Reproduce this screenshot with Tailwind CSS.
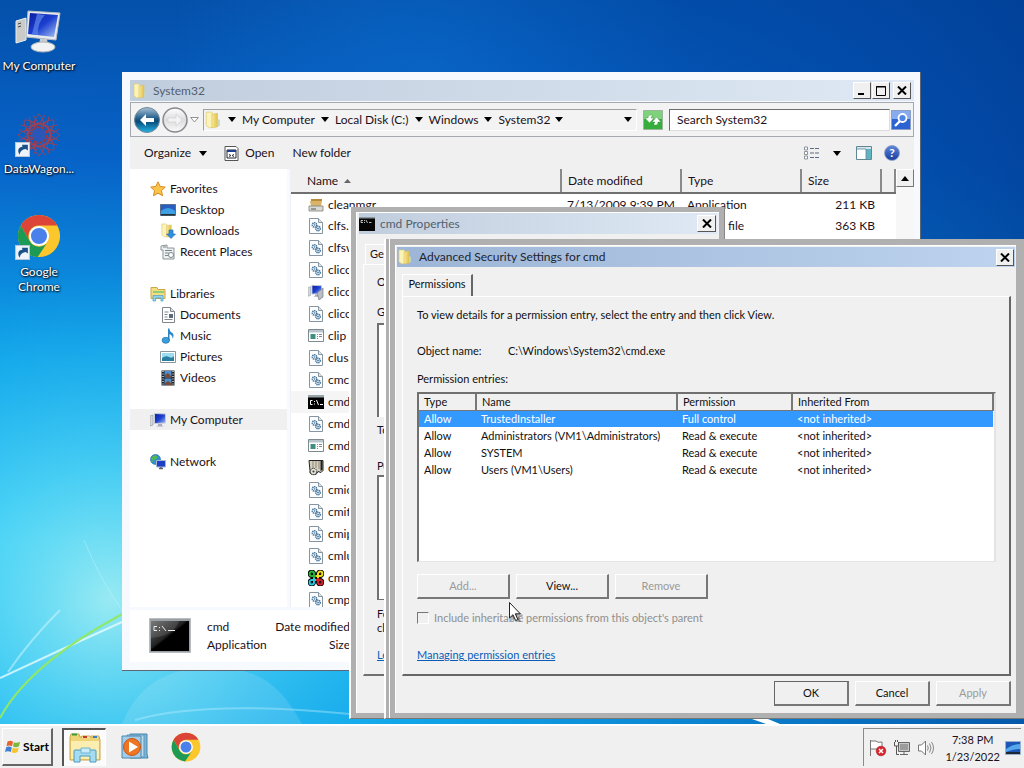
<!DOCTYPE html>
<html lang="en">
<head>
<meta charset="utf-8">
<title>Desktop</title>
<script src="https://cdn.jsdelivr.net/npm/@tailwindcss/browser@4"></script>
</head>
<body class="h-screen overflow-hidden flex flex-col font-['Lato',sans-serif] text-xs text-[#1c1018] cursor-default select-none">

<svg class="absolute size-0" aria-hidden="true">
  <defs>
    <linearGradient id="gFolder" x1="0" x2="1"><stop offset="0" stop-color="#f8ea9c"/><stop offset="1" stop-color="#dfc04a"/></linearGradient>
    <linearGradient id="gScreen" x1="0" x2="1" y2="1"><stop offset="0" stop-color="#0a1ea0"/><stop offset=".5" stop-color="#1c3fd0"/><stop offset="1" stop-color="#a8c4f4"/></linearGradient>
    <linearGradient id="gBack" x1="0" x2="0" y1="0" y2="1"><stop offset="0" stop-color="#a9c3d6"/><stop offset=".45" stop-color="#1d5a86"/><stop offset=".55" stop-color="#084a78"/><stop offset="1" stop-color="#22b4e6"/></linearGradient>
    <linearGradient id="gFwd" x1="0" x2="0" y1="0" y2="1"><stop offset="0" stop-color="#ffffff"/><stop offset=".5" stop-color="#dcdcde"/><stop offset="1" stop-color="#fafafa"/></linearGradient>
    <linearGradient id="gCmd" x1="0" x2="1" y1="0" y2="1"><stop offset="0" stop-color="#666"/><stop offset=".45" stop-color="#222"/><stop offset=".5" stop-color="#000"/></linearGradient>
  </defs>
  <symbol id="folder" viewBox="0 0 16 16"><path d="M2 1h5l1 2v11l-3 1-3-2z" fill="#fbf3b8" stroke="#e0cd7c" stroke-width=".7"/><path d="M7 3l5-1v12l-5 1z" fill="url(#gFolder)" stroke="#dcc260" stroke-width=".6"/><path d="M12 7l2 1v5l-2 1z" fill="#c9d3b8"/></symbol>
  <symbol id="gear" viewBox="0 0 14 16"><path d="M.5.5h9l4 4v11H.5z" fill="#fbfdff" stroke="#8795a2"/><path d="M9.500.5v4h4" fill="#dde4ea" stroke="#8795a2"/><circle cx="5.500" cy="7" r="2.200" fill="none" stroke="#3f6f95" stroke-width="1.500" stroke-dasharray="1.200 .6"/><circle cx="5.500" cy="7" r=".8" fill="#3f6f95"/><circle cx="9" cy="10.500" r="2.300" fill="#cfe0ee" stroke="#3f6f95" stroke-width="1.400" stroke-dasharray="1.200 .6"/><circle cx="9" cy="10.500" r=".8" fill="#3f6f95"/></symbol>
  <symbol id="app" viewBox="0 0 16 16"><path d="M.5 1.500h15v12H.5z" fill="#fff" stroke="#7f8a90"/><path d="M1 2h14v2.500H1z" fill="#b9c7cc"/><path d="M2.500 6h5v5h-5z" fill="#3d8f80"/><path d="M9 6.500h1M9 8.500h1M9 10.500h1M11 6.500h3M11 8.500h3" stroke="#7c8c94"/></symbol>
  <symbol id="cmd" viewBox="0 0 16 14"><path d="M0 0h16v14H0z" fill="#000"/><path d="M0 0h16v2.500H0z" fill="#9aa3a8"/><path d="M4.500 5.500h-2v4h2M6.500 6v1M6.500 8.500v1M8.500 5l2 5M12 9.500h3" stroke="#fff" fill="none"/></symbol>
  <symbol id="cmdsmall" viewBox="0 0 16 14"><path d="M0 0h16v14H0z" fill="#050505"/><path d="M0 0h16v1.500H0z" fill="#8f989e"/><path d="M4 3.500H2v2h2M5.500 3v1M5.500 5v1M7 3l1.500 3M10 5.500h2.500" stroke="#e8e8e8" stroke-width=".8" fill="none"/></symbol>
  <symbol id="monitor" viewBox="0 0 16 16"><path d="M0 4l3-1v10l-3 1z" fill="#d5d9df" stroke="#8a909a" stroke-width=".6"/><path d="M4.500 1.500l11 .5v9l-11 .5z" fill="url(#gScreen)" stroke="#c6cbd6"/><path d="M8 12h4v1.500l2 1H6l2-1z" fill="#a9aebc"/></symbol>
  <symbol id="chrome" viewBox="0 0 48 48"><circle cx="24" cy="24" r="23" fill="#fbc72d"/><path d="M4.100 12.500A23 23 0 0 1 43.900 12.500H24A11.500 11.500 0 0 0 14 29.800z" fill="#db4437"/><path d="M4.100 12.500A23 23 0 0 0 22.500 47L34 29.800A11.500 11.500 0 0 1 14 29.800z" fill="#1d9a55"/><circle cx="24" cy="24" r="11" fill="#fff"/><circle cx="24" cy="24" r="8.800" fill="#4a80ec"/></symbol>
  <symbol id="shortcut" viewBox="0 0 14 14"><path d="M.5.5h13v13H.5z" fill="#eef4fb" stroke="#b8c6d6"/><path d="M4.500 12C1.500 8 3.500 4.500 7 4.500L6.500 2.500H12V8l-2-1.500C7 7 4.500 8.500 4.500 12z" fill="#1b4f8a"/></symbol>
  <symbol id="tri" viewBox="0 0 8 5"><path d="M0 0h8L4 5z" fill="#000"/></symbol>
  <symbol id="close" viewBox="0 0 10 9"><path d="M1 .5l8 8M9 .5l-8 8" stroke="#000" stroke-width="2"/></symbol>
  <symbol id="disk" viewBox="0 0 16 16"><path d="M3 2h11v2H3zM4 5h9v2H4z" fill="#b98a3c"/><path d="M2 4h12l-1 5H3z" fill="#d8b468"/><path d="M1 9h14v5H1z" fill="#d9d9d4" stroke="#80807a" stroke-width=".8"/><path d="M3 12h5" stroke="#555"/></symbol>
  <symbol id="net" viewBox="0 0 16 16"><use href="#monitor" width="14" height="14"/><path d="M9 9l6-5v9l-4 3z" fill="#b9bec6" stroke="#737a84" stroke-width=".7"/></symbol>
  <symbol id="scroll" viewBox="0 0 16 16"><path d="M1 .5h14v10l-2 2-3-1-2 3H4q-3-1-2-4z" fill="#d6d0c0" stroke="#222"/><path d="M5 1v7M8 1v7M11 1v8" stroke="#8d8778"/><path d="M12.500 1v10l2-1V1z" fill="#222"/><circle cx="5.500" cy="11.500" r="3.200" fill="#e6e2d6" stroke="#333" stroke-dasharray="1.500 .6"/><circle cx="5.500" cy="11.500" r="1.100" fill="#444"/></symbol>
  <symbol id="knot" viewBox="0 0 16 16"><g id="loop" fill="none" stroke="#000" stroke-width="4"><path d="M6 6H3.800A2.200 2.200 0 1 1 6 3.800V8M10 6h2.200A2.200 2.200 0 1 0 10 3.800V8M6 10H3.800A2.200 2.200 0 1 0 6 12.200V8M10 10h2.200A2.200 2.200 0 1 1 10 12.200V8M5 6h6M5 10h6"/></g><g fill="none" stroke-width="2"><path d="M8 6H3.800A2.200 2.200 0 1 1 6 3.800V8" stroke="#24b43c"/><path d="M8 6h4.200A2.200 2.200 0 1 0 10 3.800V8" stroke="#f2dc1c"/><path d="M8 10H3.800A2.200 2.200 0 1 0 6 12.200V8" stroke="#28c8e0"/><path d="M8 10h4.200A2.200 2.200 0 1 1 10 12.200V8" stroke="#d8202c"/></g></symbol>
</svg>

<main class="relative flex-1 min-h-0 overflow-hidden">
  <svg class="absolute inset-0 size-full" viewBox="0 0 1024 724" preserveAspectRatio="none" aria-hidden="true">
    <defs>
      <linearGradient id="sky" x1="0" x2="0" y1="0" y2="1"><stop offset="0" stop-color="#0450aa"/><stop offset=".22" stop-color="#0763c8"/><stop offset=".5" stop-color="#0ea4ea"/><stop offset=".75" stop-color="#2cc6f6"/><stop offset="1" stop-color="#12aeee"/></linearGradient>
      <radialGradient id="glow" gradientUnits="userSpaceOnUse" cx="110" cy="600" r="330"><stop offset="0" stop-color="#a8f2f4" stop-opacity=".9"/><stop offset=".4" stop-color="#62ddf6" stop-opacity=".6"/><stop offset="1" stop-color="#20b4f0" stop-opacity="0"/></radialGradient>
      <linearGradient id="dark" x1="0" x2="1"><stop offset="0" stop-color="#003a90" stop-opacity="0"/><stop offset=".35" stop-color="#0050b8" stop-opacity=".05"/><stop offset="1" stop-color="#003c94" stop-opacity=".75"/></linearGradient>
      <radialGradient id="topglow" gradientUnits="userSpaceOnUse" cx="430" cy="70" r="260"><stop offset="0" stop-color="#1080e0" stop-opacity=".35"/><stop offset="1" stop-color="#1488e8" stop-opacity="0"/></radialGradient>
    </defs>
    <path d="M0 0h1024v724H0z" fill="url(#sky)"/>
    <path d="M0 0h1024v724H0z" fill="url(#glow)"/>
    <path d="M0 0h1024v724H0z" fill="url(#topglow)"/>
    <path d="M0 0h1024v724H0z" fill="url(#dark)"/>
    <path d="M122 724c20-50 60-58 100-56s60 20 80 56" fill="#fff" fill-opacity=".12"/>
    <path d="M135 720q70-20 215-6" fill="none" stroke="#bdf0ff" stroke-opacity=".4" stroke-width="2"/>
    <path d="M0 678Q60 650 122 622" fill="none" stroke="#e6fbff" stroke-opacity=".8" stroke-width="2"/>
    <path d="M8 672Q30 640 60 610" fill="none" stroke="#d8f7ff" stroke-opacity=".5" stroke-width="2"/>
    <path d="M84 540Q100 580 122 610" fill="none" stroke="#d8f7ff" stroke-opacity=".35" stroke-width="1"/>
    <path d="M0 718Q30 662 130 610" fill="none" stroke="#8fe86a" stroke-width="2"/>
    <path d="M752 719h16l12 5h-14z" fill="#fff"/>
  </svg>

  <nav aria-label="Desktop" class="relative w-[78px] pt-2 flex flex-col text-white text-center leading-[15px] [text-shadow:1px_1px_2px_#000,0_0_2px_#001a40]">
    <a href="#computer" class="h-[103px] flex flex-col items-center gap-0.5">
      <svg class="size-12" viewBox="0 0 48 48"><path d="M1 13l10-3v22L1 35z" fill="#c9cbc8" stroke="#eceeec"/><path d="M3 16l3-1M3 19l3-1" stroke="#444"/><path d="M13 3l32 2-4 27-30-3z" fill="#e8ebee" stroke="#b7bcc4"/><path d="M15 5l28 2-4 22-26-3z" fill="url(#gScreen)"/><path d="M22 6l8 1q-8 8-7 20l-6-1z" fill="#5f88ec" fill-opacity=".7"/><path d="M25 31h7l1 6h-9z" fill="#c8ccd0"/><ellipse cx="28" cy="39" rx="12" ry="5" fill="#f1f2f3" stroke="#aeb4ba"/></svg>
      My Computer</a>
    <a href="#datawagon" class="h-[103px] flex flex-col items-center gap-0.5">
      <svg class="size-12" viewBox="0 0 48 48"><g fill="none" stroke="#a8404f" stroke-width="1" stroke-opacity=".85"><g id="petal"><path d="M24 24Q14 12 24 3Q34 12 24 24M18 4l6 9 6-9M16 11l16 4M32 11l-16 4"/></g><use href="#petal" transform="rotate(45 24 24)"/><use href="#petal" transform="rotate(90 24 24)"/><use href="#petal" transform="rotate(135 24 24)"/><use href="#petal" transform="rotate(180 24 24)"/><use href="#petal" transform="rotate(225 24 24)"/><use href="#petal" transform="rotate(270 24 24)"/><use href="#petal" transform="rotate(315 24 24)"/></g><circle cx="24" cy="24" r="7" fill="#2a56b8"/><circle cx="24" cy="24" r="8" fill="none" stroke="#a8343c" stroke-width="2" stroke-dasharray="3 2"/><use href="#shortcut" x="0" y="31" width="15" height="15"/></svg>
      DataWagon...</a>
    <a href="#chrome" class="h-[103px] flex flex-col items-center gap-0.5">
      <svg class="size-12" viewBox="0 0 48 48"><use href="#chrome" x="2" width="44" height="44" y="0"/><use href="#shortcut" x="0" y="31" width="15" height="15"/></svg>
      Google<br>Chrome</a>
  </nav>

  <!-- File browser -->
  <section aria-label="System32" class="absolute left-[122px] top-[72px] w-[799px] h-[599px] flex flex-col bg-[#f6faff] border-r border-b border-[#5d6675] p-2 pr-1.5 pb-2">
    <header class="h-[21px] shrink-0 flex items-center bg-linear-to-r from-[#c0cddd] to-[#dfe9f5] pl-0.5 pr-[3px] text-[#54606e]">
      <svg class="size-4"><use href="#folder"/></svg>
      <h1 class="ml-[5px] flex-1">System32</h1>
      <div class="flex [&>button]:h-[17px] [&>button]:w-[18px] [&>button]:bg-[#f0f0f0] [&>button]:border [&>button]:border-white [&>button]:border-r-[#555] [&>button]:border-b-[#555] [&>button]:flex [&>button]:justify-center [&>button]:items-center">
        <button type="button" aria-label="Minimize"><svg class="w-2.5 h-[9px]" viewBox="0 0 10 9"><path d="M1 7h6v2H1z"/></svg></button>
        <button type="button" aria-label="Maximize" class="ml-px"><svg class="w-2.5 h-2.5" viewBox="0 0 10 10"><path d="M.5.5h9v9h-9zM0 1h10" fill="none" stroke="#000"/></svg></button>
        <button type="button" aria-label="Close" class="ml-[3px]"><svg class="w-2.5 h-[9px]"><use href="#close"/></svg></button>
      </div>
    </header>

    <div class="mt-px h-[35px] shrink-0 flex items-center bg-[#f3f3f3] border border-[#a5a9af] pl-[3px] pr-0.5">
      <button type="button" aria-label="Back"><svg class="size-[26px]" viewBox="0 0 26 26"><circle cx="13" cy="13" r="12.500" fill="url(#gBack)" stroke="#6f8797"/><path d="M6 13l6-6v4h8v4h-8v4z" fill="#fff"/></svg></button>
      <button type="button" aria-label="Forward" class="ml-0.5"><svg class="size-[26px]" viewBox="0 0 26 26"><circle cx="13" cy="13" r="12" fill="url(#gFwd)" stroke="#85898f" stroke-width="1.500"/><path d="M20 13l-6-6v4H6v4h8v4z" fill="#f2f2f2" stroke="#cdcdd0" stroke-width=".6"/></svg></button>
      <button type="button" aria-label="Recent pages" class="ml-0.5"><svg class="w-[9px] h-1.5" viewBox="0 0 9 6"><path d="M.7.5h7.600L4.500 5z" fill="#fff" stroke="#777" stroke-width=".8"/></svg></button>
      <div class="ml-1 flex-1 h-[22px] flex items-center border border-r-white border-b-white border-[#a0a0a0] bg-[#f3f3f3] pr-1">
        <svg class="size-[18px]"><use href="#folder"/></svg>
        <svg class="ml-1.5 w-2 h-[5px]"><use href="#tri"/></svg>
        <button type="button" class="ml-1.5">My Computer</button><svg class="ml-1.5 w-2 h-[5px]"><use href="#tri"/></svg>
        <button type="button" class="ml-1.5">Local Disk (C:)</button><svg class="ml-1.5 w-2 h-[5px]"><use href="#tri"/></svg>
        <button type="button" class="ml-1.5">Windows</button><svg class="ml-1.5 w-2 h-[5px]"><use href="#tri"/></svg>
        <button type="button" class="ml-1.5">System32</button><svg class="ml-[5px] w-2 h-[5px]"><use href="#tri"/></svg>
        <button type="button" aria-label="Previous locations" class="ml-auto"><svg class="w-2 h-[5px]"><use href="#tri"/></svg></button>
      </div>
      <button type="button" aria-label="Refresh" class="ml-1.5"><svg class="size-5" viewBox="0 0 20 20"><path d="M.5.5h19v19H.5z" fill="#37ae3c" stroke="#9bb59a"/><path d="M1 1h18v8H1z" fill="#7fd27c"/><path d="M9 5H7Q5 5 5 8H2l4.500 5L11 8H8Q8 7 9 7zM11 15h2q2 0 2-3h3l-4.500-5L9 12h3q0 1-1 1z" fill="#fff" stroke="#2b8f30" stroke-width=".4"/></svg></button>
      <input aria-label="Search" value="Search System32" class="ml-1.5 w-[221px] h-[22px] bg-white border border-[#6d6d6d] border-r-[#ddd] border-b-[#ddd] pl-[7px] text-xs outline-none">
      <button type="button" aria-label="Go" class="ml-px"><svg class="size-5" viewBox="0 0 20 20"><path d="M.5.5h19v19H.5z" fill="#2c63d2" stroke="#8d9fc4"/><path d="M1 1h18v8H1z" fill="#86acef"/><circle cx="11.500" cy="8" r="4" fill="#4f86e6" stroke="#fff" stroke-width="1.800"/><path d="M9 11l-5 5" stroke="#fff" stroke-width="2.400"/></svg></button>
    </div>

    <div class="h-8 shrink-0 flex items-center bg-[#f0f0f0] pl-3.5 pr-3.5">
      <button type="button" class="flex items-center gap-2">Organize<svg class="w-2 h-[5px]"><use href="#tri"/></svg></button>
      <button type="button" class="ml-[17px] flex items-center gap-1.5"><svg class="size-[15px]" viewBox="0 0 15 15"><path d="M1 .5h11l2 2v12H1z" fill="#fff" stroke="#555"/><path d="M3 4h9v8H3z" fill="#fff" stroke="#223"/><path d="M3 4h9v2H3z" fill="#1d3f94"/><path d="M5 8.500l2 1-2 1M10 8.500l-2 1 2 1" stroke="#333" fill="none"/></svg>Open</button>
      <button type="button" class="ml-[18px]">New folder</button>
      <button type="button" aria-label="Change view" class="ml-auto flex items-center gap-[13px]"><svg class="w-4 h-3.5" viewBox="0 0 16 14"><path d="M.5 1h3v3h-3zM.5 5.500h3v3h-3zM.5 10h3v3h-3z" fill="#fff" stroke="#8d939b"/><path d="M6 2.500h4M11 2.500h4M6 7h4M11 7h4M6 11.500h4M11 11.500h4" stroke="#5d6b85"/></svg><svg class="w-2 h-[5px]"><use href="#tri"/></svg></button>
      <button type="button" aria-label="Preview pane" class="ml-[15px]"><svg class="w-4 h-3.5" viewBox="0 0 16 14"><path d="M.5.5h15v13H.5z" fill="#fff" stroke="#5f8796"/><path d="M1 1h14v2H1z" fill="#d5e6ec"/><path d="M10 3h5v10h-5z" fill="#5fb4c4"/><path d="M10 3v10M1 3h9" stroke="#5f8796" stroke-width=".8"/></svg></button>
      <button type="button" aria-label="Help" class="ml-3 size-4 rounded-full bg-linear-to-b from-[#5c86d8] to-[#1b3fa0] border border-[#8fa0c8] text-white font-bold leading-none flex items-center justify-center">?</button>
    </div>

    <div class="flex-1 min-h-0 flex">
      <nav aria-label="Folders" class="w-[157px] shrink-0 bg-white pt-[9px] [&_a]:flex [&_a]:items-center [&_a]:gap-1 [&_a]:h-[21px] [&_svg]:size-4">
        <ul class="pl-5">
          <li><a href="#fav"><svg viewBox="0 0 16 16"><path d="M8 .8l2.200 4.700 5.100.6-3.800 3.500 1 5.100L8 12.200l-4.500 2.500 1-5.100L.7 6.100l5.100-.6z" fill="#f9c44a" stroke="#d88a24"/></svg>Favorites</a>
            <ul class="pl-2.5 mb-[21px]">
              <li><a href="#desk"><svg viewBox="0 0 16 16"><path d="M.5 2.500h15v11H.5z" fill="#2a5fc0" stroke="#5b708e"/><path d="M1 9q7-6 14 0v4H1z" fill="#3f9fe4"/><path d="M1 12h14v1.500H1z" fill="#233"/></svg>Desktop</a></li>
              <li><a href="#down"><svg viewBox="0 0 16 16"><use href="#folder" width="15" height="15"/><path d="M9 7h4v4h2.500L11 15.500 6.500 11H9z" fill="#2f8fe0" stroke="#1d64ad" stroke-width=".6"/></svg>Downloads</a></li>
              <li><a href="#recent"><svg viewBox="0 0 16 16"><path d="M1 2l6-1v3h7v11H3V6H1z" fill="#eef1f2" stroke="#8b9499"/><path d="M5 6.500h7M5 9h4M5 11.500h3M3 3h3" stroke="#7d868b"/><circle cx="11" cy="11" r="2.500" fill="#fff" stroke="#7d868b"/></svg>Recent Places</a></li>
            </ul></li>
          <li><a href="#lib"><svg viewBox="0 0 16 16"><path d="M1 1.500h6l1 2h7v9H1z" fill="#f3dc82" stroke="#c9a846"/><path d="M3 5h11v2H3z" fill="#8ed07a"/><path d="M3 15V9.500h10V15h-2v-3H5.500v3z" fill="#8fd3ee" stroke="#4f9fc0" stroke-width=".7"/></svg>Libraries</a>
            <ul class="pl-2.5 mb-[21px]">
              <li><a href="#docs"><svg viewBox="0 0 16 16"><path d="M2.500.5h8l4 4v11h-12z" fill="#fff" stroke="#7e868c"/><path d="M10.500.5v4h4" fill="#ddd" stroke="#7e868c"/><path d="M4.500 5h4M4.500 7.500h3M4.500 10h3M4.500 12.500h8" stroke="#7e868c"/><path d="M9 7h4v4H9z" fill="#5a6a7c"/></svg>Documents</a></li>
              <li><a href="#music"><svg viewBox="0 0 16 16"><path d="M8 .5h1.500q0 3 3 4.500 2 2 0 6 .5-3.500-3-5v7H8z" fill="#2a86c4"/><ellipse cx="5.800" cy="12.300" rx="3.700" ry="3" fill="#3aa0dc" stroke="#1c6ba4" stroke-width=".7"/></svg>Music</a></li>
              <li><a href="#pics"><svg viewBox="0 0 16 16"><path d="M.5 2.500h15v11H.5z" fill="#fff" stroke="#8a949c"/><path d="M2 4h12v8H2z" fill="#9bdcf2"/><path d="M2 9q4-3 7-1t5-1v5H2z" fill="#2a7fa0"/></svg>Pictures</a></li>
              <li><a href="#vids"><svg viewBox="0 0 16 16"><path d="M1.500.5h13v15h-13z" fill="#1c2228"/><path d="M4.500 1h7v6.500h-7zM4.500 8.500h7V15h-7z" fill="#4f8fd0"/><path d="M5 5l3-2 3 3v1.500H5zM5 13l3-2 3 2v2H5z" fill="#7a4a34"/><path d="M3 1v14M13 1v14" stroke="#fff" stroke-width="1.200" stroke-dasharray="1 1.500"/></svg>Videos</a></li>
            </ul></li>
        </ul>
        <a href="#computer" class="pl-5 bg-[#f0f0f0]"><svg><use href="#monitor"/></svg>My Computer</a>
        <a href="#network" class="pl-5 mt-[21px]"><svg viewBox="0 0 16 16"><circle cx="5.500" cy="5.500" r="5" fill="#2f8fd8" stroke="#1b5ea6" stroke-width=".6"/><path d="M2 3q3-3 5-1T4 6 2 8 1 5z" fill="#4fb84f"/><path d="M6.500 6.500h9v6.500h-9z" fill="#1d3fc4" stroke="#aab6cc"/><path d="M9 14.500h4M11 13v2" stroke="#5a6270" stroke-width="1.500"/></svg>Network</a>
      </nav>

      <div class="ml-[3px] flex-1 min-w-0 bg-white border-l border-[#f0f0f0] flex overflow-hidden">
        <div class="flex-1 min-w-0 overflow-hidden">
          <table class="w-full table-fixed border-collapse [&_td]:h-[22px] [&_td]:p-0 [&_td]:whitespace-nowrap [&_th]:font-normal [&_th]:text-left [&_th]:h-6 [&_th]:p-0 [&_th]:bg-[#f0f0f0] [&_th]:border-b-2 [&_th]:border-b-[#707070] [&_th+th]:border-l-2 [&_th+th]:border-l-[#8a8a8a]">
            <thead><tr>
              <th class="w-[270px]"><span class="pl-4 flex items-center gap-1.5">Name<svg class="w-[7px] h-1" viewBox="0 0 7 4"><path d="M0 4h7L3.500 0z" fill="#666"/></svg></span></th>
              <th class="w-[120px]"><span class="pl-1.5">Date modified</span></th>
              <th class="w-[120px]"><span class="pl-1.5">Type</span></th>
              <th class="w-20"><span class="pl-1.5">Size</span></th>
              <th aria-label="More" class="border-r-2 border-r-[#8a8a8a]"></th>
            </tr></thead>
            <tbody id="files"></tbody>
          </table>
        </div>
        <div class="w-[18px] shrink-0 bg-[#f7f7f7]">
          <button type="button" aria-label="Scroll up" class="w-[18px] h-[18px] bg-[#f0f0f0] border border-white border-r-[#777] border-b-[#777] flex items-center justify-center"><svg class="w-2 h-[5px] rotate-180"><use href="#tri"/></svg></button>
        </div>
      </div>
    </div>

    <footer class="h-[52px] mt-[3px] shrink-0 bg-white pl-[19px] pt-2 flex">
      <svg class="w-[42px] h-[35px]" viewBox="0 0 42 35"><path d="M.5.5h41v34H.5z" fill="#9aa0a4" stroke="#b8bcc0"/><path d="M2 3h38v30H2z" fill="url(#gCmd)"/><path d="M2 20Q25 18 30 3H2z" fill="#fff" fill-opacity=".12"/><path d="M8 8.500H5v4h3M10.500 9v1M10.500 12v1M13 8l4 5M19 12.500h7" stroke="#eee" fill="none"/></svg>
      <dl class="ml-4 leading-[18px] grid grid-cols-[64px_82px] content-start"><dt>cmd</dt><dd class="text-right">Date modified:</dd><dt>Application</dt><dd class="text-right">Size:</dd></dl>
    </footer>
  </section>

  <!-- File properties -->
  <section aria-label="cmd Properties" class="absolute left-[349px] top-[207px] w-[376px] h-[512px] bg-[#b0b0b0] border-l-2 border-l-white border-r border-b border-r-[#888] border-b-[#777] p-[5px] flex text-[11px]">
    <div class="flex-1 bg-[#f0f0f0] border-t border-l border-white flex flex-col">
      <header class="h-[21px] mx-0.5 shrink-0 flex items-center bg-linear-to-r from-[#c0cddd] to-[#dfe9f5] pr-px text-xs text-[#54606e]">
        <svg class="w-4 h-3.5"><use href="#cmdsmall"/></svg>
        <h2 class="ml-[5px] flex-1">cmd Properties</h2>
        <button type="button" aria-label="Close" class="w-[19px] h-[17px] bg-[#f0f0f0] border border-white border-r-[#555] border-b-[#555] flex items-center justify-center"><svg class="w-2.5 h-[9px]"><use href="#close"/></svg></button>
      </header>
      <div class="mt-2.5 ml-2 h-5 w-[50px] border-t border-l border-white pl-1 leading-[18px]">General</div>
      <div class="ml-1.5 mr-1.5 h-[412px] shrink-0 border border-white border-r-2 border-b-2 border-r-[#707070] border-b-[#707070] pl-[13px] pt-2.5 whitespace-nowrap leading-3.5">
        <p>Object name:</p>
        <p class="mt-4">Group or user names:</p>
        <div class="mt-1 h-[94px] bg-white border-l-2 border-t-2 border-[#707070]"></div>
        <p class="mt-1.5">To change permissions, click Edit.</p>
        <p class="mt-[22px]">Permissions for SYSTEM</p>
        <div class="mt-0.5 h-[125px] bg-white border-l-2 border-t-2 border-b border-[#707070]"></div>
        <p class="mt-[7px]">For special permissions or advanced settings,<br>click Advanced.</p>
        <a href="#learn" class="mt-[13px] inline-block underline text-[#0a64b4]">Learn about access control and permissions</a>
      </div>
    </div>
  </section>

  <!-- Advanced security settings -->
  <section aria-label="Advanced Security Settings for cmd" class="absolute left-[384px] top-[239px] w-[640px] h-[480px] bg-[#b0b0b0] border-l-2 border-l-white border-b border-b-[#777] pl-[3px] flex text-[11px] text-[#101010]">
    <div class="flex-1 border-l border-l-white pl-[5px] pt-[6px] pr-2 pb-[5px] flex">
      <div class="flex-1 bg-[#f0f0f0] border-t border-l border-white flex flex-col pr-px">
        <header class="h-5 mt-px ml-px shrink-0 flex items-center bg-linear-to-r from-[#9db5d6] to-[#bdd3ee] pr-px text-xs text-[#1c2430]">
          <svg class="size-4"><use href="#folder"/></svg>
          <h2 class="ml-1.5 flex-1">Advanced Security Settings for cmd</h2>
          <button type="button" aria-label="Close" class="w-[18px] h-[17px] bg-[#f0f0f0] border border-white border-r-[#555] border-b-[#555] flex items-center justify-center"><svg class="w-2.5 h-[9px]"><use href="#close"/></svg></button>
        </header>
        <div role="tablist" class="mt-[7px] ml-1.5 shrink-0 flex"><button type="button" role="tab" aria-selected="true" class="h-[22px] w-[71px] border-t border-l border-white border-r-2 border-r-[#666] pb-0.5">Permissions</button></div>
        <div class="ml-1.5 mr-1 h-[380px] shrink-0 border border-white border-r-2 border-b-2 border-r-[#666] border-b-[#666] pl-3.5 pr-[13px] flex flex-col leading-3.5">
          <p class="mt-[11px]">To view details for a permission entry, select the entry and then click View.</p>
          <p class="mt-[22px] grid grid-cols-[91px_1fr]"><span>Object name:</span><span>C:\Windows\System32\cmd.exe</span></p>
          <p class="mt-3.5">Permission entries:</p>
          <div class="mt-1.5 h-[170px] bg-white border-2 border-[#707070] border-b border-r-[#e4e4e4] border-b-[#e4e4e4]">
            <table class="w-full table-fixed border-collapse [&_td]:h-[17px] [&_td]:py-0 [&_td]:pl-[5px] [&_td]:pr-0 [&_th]:h-4 [&_th]:py-0 [&_th]:pl-[5px] [&_th]:pr-0 [&_th]:font-normal [&_th]:text-left [&_th]:bg-[#f0f0f0] [&_th]:border-r-2 [&_th]:border-b [&_th]:border-[#777] [&_td]:leading-none [&_th]:leading-none">
              <thead><tr><th class="w-[57px]">Type</th><th class="w-[201px]">Name</th><th class="w-[115px]">Permission</th><th>Inherited From</th></tr></thead>
              <tbody>
                <tr class="bg-[#3399ff] text-white"><td>Allow</td><td>TrustedInstaller</td><td>Full control</td><td>&lt;not inherited&gt;</td></tr>
                <tr><td>Allow</td><td>Administrators (VM1\Administrators)</td><td>Read &amp; execute</td><td>&lt;not inherited&gt;</td></tr>
                <tr><td>Allow</td><td>SYSTEM</td><td>Read &amp; execute</td><td>&lt;not inherited&gt;</td></tr>
                <tr><td>Allow</td><td>Users (VM1\Users)</td><td>Read &amp; execute</td><td>&lt;not inherited&gt;</td></tr>
              </tbody>
            </table>
          </div>
          <div class="mt-3 flex gap-1.5 [&>button]:w-[93px] [&>button]:h-[25px] [&>button]:border [&>button]:border-white [&>button]:border-r-2 [&>button]:border-b-2 [&>button]:border-r-[#777] [&>button]:border-b-[#777] [&>button:disabled]:text-[#9a9a9a]">
            <button type="button" disabled>Add...</button>
            <button type="button">View...</button>
            <button type="button" disabled>Remove</button>
          </div>
          <label class="mt-3 flex items-center gap-[5px] text-[#8f8f8f]"><input type="checkbox" disabled class="appearance-none size-3 border border-[#777] border-r-white border-b-white bg-[#f0f0f0]">Include inheritable permissions from this object's parent</label>
          <a href="#manage" class="mt-[23px] self-start underline text-[#0a5cb8]">Managing permission entries</a>
        </div>
        <div class="mt-[5px] mr-1 flex justify-end gap-1.5 [&>button]:w-[75px] [&>button]:h-[25px] [&>button]:border [&>button]:border-r-2 [&>button]:border-b-2 [&>button]:border-r-[#777] [&>button]:border-b-[#777]">
          <button type="button" class="border-[#666]">OK</button>
          <button type="button" class="border-white">Cancel</button>
          <button type="button" disabled class="border-white text-[#9a9a9a]">Apply</button>
        </div>
      </div>
    </div>
  </section>

  <svg class="absolute left-[509px] top-[602px] w-3.5 h-5" viewBox="0 0 14 20" aria-hidden="true"><path d="M2 3v16l4-3 3 5 3-2-2-5h5z" fill="#000" fill-opacity=".25"/><path d="M.5.5v15.500l3.500-3.300 2.600 5.800 2.300-1-2.600-5.700h5z" fill="#fff" stroke="#222"/></svg>
</main>

<!-- Taskbar -->
<footer class="h-11 shrink-0 bg-[#f0f0f0] border-t-2 border-white flex items-start pt-0.5 pl-0.5 pr-[3px]">
  <button type="button" class="w-[51px] h-[38px] border border-white border-r-2 border-b-2 border-r-[#666] border-b-[#666] flex items-center justify-center gap-0.5 font-bold text-black">
    <svg class="size-4 shrink-0" viewBox="0 0 16 16"><path d="M2.500 2.500q3-1.500 5.500.3L7 7.300Q4.500 5.800 1.500 7.300z" fill="#e8622c"/><path d="M8.800 3.200q3 1.500 6.200-.4L14 7.300q-3 1.600-6 .3z" fill="#7cb83c"/><path d="M1.200 8.300q3-1.400 5.600.1L5.800 13Q3 11.500 0 13z" fill="#3f7fd8"/><path d="M7.700 8.700q3 1.400 6 0L12.600 13q-3 1.600-5.900.3z" fill="#f7c52e"/></svg>Start</button>
  <button type="button" aria-label="File browser" class="ml-[9px] w-[44px] h-[38px] bg-[#fbfbfb] border-t-2 border-l-2 border-[#555] border-r border-r-white flex items-center justify-center">
    <svg class="w-8 h-[30px]" viewBox="0 0 32 30"><path d="M1 4l1-3h8l1 3h19l1 3v20H1z" fill="#efd477" stroke="#c9a648"/><path d="M12 5l1-2h8l1 2M22 3h8v3" fill="#f9e9a6" stroke="#c9a648"/><path d="M3 1.500h5" stroke="#3b9a3b" stroke-width="2"/><path d="M14 4h4" stroke="#c23b2e" stroke-width="2"/><path d="M24 4h4" stroke="#3b7fc8" stroke-width="2"/><path d="M2 8h28v18H2z" fill="#fbeeb0"/><path d="M5 29V18q0-1 1-1h20q1 0 1 1v11h-6v-6H11v6z" fill="#a6dcf2" stroke="#4d9cc0"/><path d="M12 15h9v5h-9z" fill="#c9ecf9" stroke="#6fb4d0"/></svg></button>
  <button type="button" aria-label="Media player" class="ml-[15px] h-[38px] flex items-center"><svg class="w-[30px] h-7" viewBox="0 0 30 28"><path d="M9 1h17v20l1 4H9z" fill="#7db3d6" stroke="#4a86ae"/><path d="M6 2h17v22H6z" fill="#b9d9ec" stroke="#5a96bc"/><path d="M1 3h19v22H1z" fill="#a3cce6" stroke="#4a86ae"/><circle cx="11" cy="14" r="8.500" fill="#ee7623" stroke="#c9551a"/><path d="M8 8.500l9 5.500-9 5.500z" fill="#fff"/></svg></button>
  <button type="button" aria-label="Chrome" class="ml-5 h-[38px] flex items-center"><svg class="size-[30px]"><use href="#chrome"/></svg></button>
  <div class="ml-auto h-[38px] pl-[5px] flex items-center border-t border-l border-[#8a8a8a]">
    <svg class="size-[18px]" viewBox="0 0 18 18"><path d="M1.500 1v16M2 2h5q1 2 6 1v8q-3 1-5-1H2" fill="#fff" stroke="#777"/><circle cx="12" cy="12" r="4.800" fill="#d8242c" stroke="#a81820" stroke-width=".6"/><path d="M10 10l4 4M14 10l-4 4" stroke="#fff" stroke-width="1.500"/></svg>
    <svg class="ml-1.5 size-[18px]" viewBox="0 0 18 18"><path d="M5.500 3.500h11v9h-11z" fill="#c9c9c9" stroke="#666"/><path d="M7 5h8v6H7z" fill="#9c9c9c"/><path d="M7 15.500h8M11 13v2" stroke="#666" fill="none"/><path d="M1.500 3v4h4V3M2.500 1v2M4.500 1v2M3.500 7v8.500H6" stroke="#555" fill="none"/></svg>
    <svg class="ml-1.5 size-[18px]" viewBox="0 0 18 18"><path d="M1.500 6h3l4-4v14l-4-4h-3z" fill="#fff" stroke="#777"/><path d="M10.500 6.500q1.500 2.500 0 5M12.500 4.500q3 4.500 0 9M14.500 3q4 6 0 12" stroke="#888" fill="none"/></svg>
    <time class="ml-2.5 text-[11px] text-center leading-[17px]">7:38 PM<br>1/23/2022</time>
    <button type="button" aria-label="Show desktop" class="ml-[5px]"><svg class="w-4 h-3.5" viewBox="0 0 16 14"><path d="M.5.5h15v13H.5z" fill="#1c56b8" stroke="#9ab0cc"/><path d="M1 8q7-5 14-5v5q-7 0-14 3z" fill="#56a8ec"/><path d="M1 11h14v2H1z" fill="#1d2733"/></svg></button>
  </div>
</footer>

<template id="row"><tr><td><span class="flex items-center pl-[17px]"><svg class="w-4 h-4 shrink-0 mr-1"><use/></svg><span></span></span></td><td></td><td></td><td class="text-right"></td><td></td></tr></template>
<script>
  const files = [
    ['disk', 'cleanmgr', '7/13/2009 9:39 PM', 'Application', '211 KB'],
    ['gear', 'clfs.sys', '', 'System file', '363 KB'],
    ['gear', 'clfsw32.dll'], ['gear', 'cliconfg.dll'], ['net', 'cliconfg'], ['gear', 'cliconfg.rll'],
    ['app', 'clip'], ['gear', 'clusapi.dll'], ['gear', 'cmcfg32.dll'], ['cmd', 'cmd'], ['gear', 'cmdial32.dll'],
    ['app', 'cmdkey'], ['scroll', 'cmdl32'], ['gear', 'cmicryptinstall.dll'], ['gear', 'cmifw.dll'],
    ['gear', 'cmipnpinstall.dll'], ['gear', 'cmlua.dll'], ['knot', 'cmmon32'], ['gear', 'cmpbk32.dll']
  ];
  const body = document.getElementById('files');
  for (const [icon, name, date = '', type = '', size = ''] of files) {
    const row = document.getElementById('row').content.cloneNode(true);
    const cells = row.querySelectorAll('td');
    row.querySelector('use').setAttribute('href', '#' + icon);
    cells[0].querySelector('span span').textContent = name;
    for (const [i, text] of [date, type, size].entries()) {
      const s = document.createElement('span');
      s.className = 'px-1.5';
      s.textContent = text;
      cells[i + 1].append(s);
    }
    if (name === 'cmd') row.firstElementChild.className = 'bg-[#f5f5f5]';
    body.append(row);
  }
</script>
</body>
</html>
